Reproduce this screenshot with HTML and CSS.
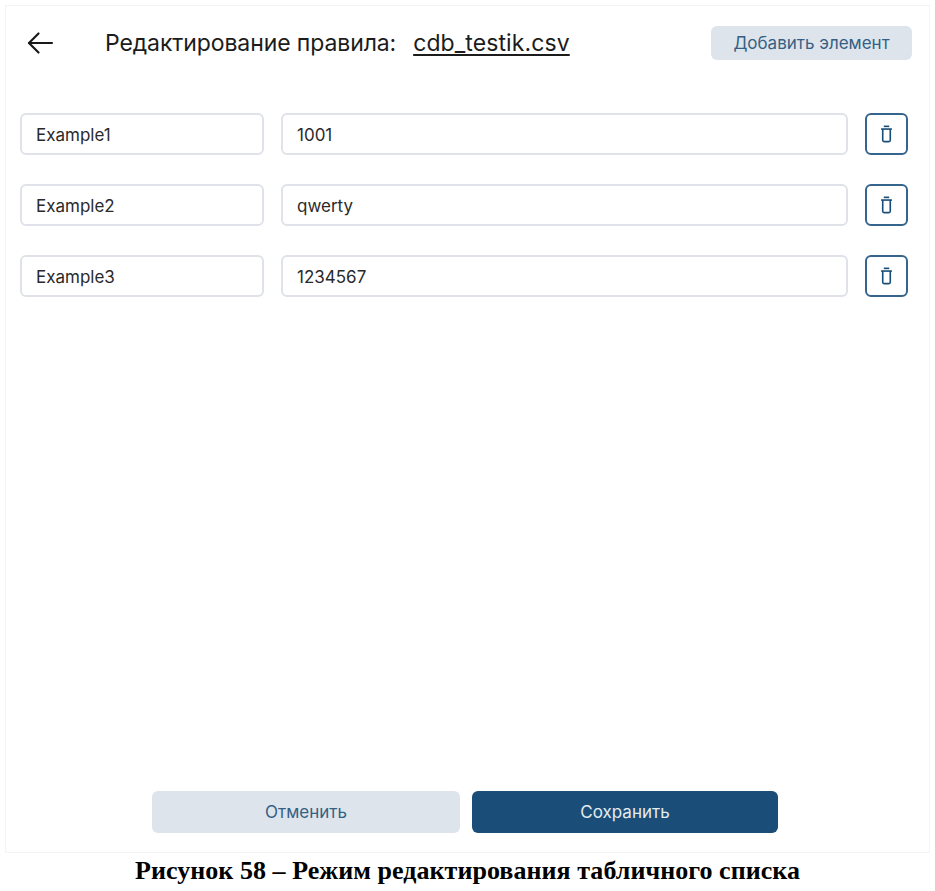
FILE: index.html
```html
<!DOCTYPE html>
<html lang="ru">
<head>
    <meta charset="UTF-8">
    <meta name="viewport" content="width=device-width, initial-scale=1.0">
    <title>Редактирование правила</title>
    <link rel="stylesheet" href="styles.css">
</head>
<body>
    <div class="panel">
        <div class="header">
            <button class="back-btn" aria-label="Назад">
                <svg width="28" height="24" viewBox="0 0 28 24" fill="none" stroke="#1a1a1a" stroke-width="2.2" stroke-linecap="round" stroke-linejoin="round">
                    <path d="M26 12H3"/>
                    <path d="M12.500 2.500L3 12l9.500 9.500"/>
                </svg>
            </button>
            <div class="title">
                <span>Редактирование правила:</span>
                <span class="file-name">cdb_testik.csv</span>
            </div>
            <button class="btn-light btn-add">Добавить элемент</button>
        </div>

        <div class="rows">
            <div class="row">
                <input class="field field-key" value="Example1">
                <input class="field field-value" value="1001">
                <button class="delete-btn" aria-label="Удалить">
                    <svg width="13" height="18" viewBox="0 0 14 20" fill="none" stroke="#1a4e78" stroke-width="1.8" stroke-linejoin="round">
                        <path d="M4 1.500h6"/>
                        <path d="M1 4.500h12"/>
                        <path d="M2.800 4.500V17a1.500 1.500 0 0 0 1.500 1.500h5.400a1.500 1.500 0 0 0 1.500-1.500V4.500"/>
                    </svg>
                </button>
            </div>
            <div class="row">
                <input class="field field-key" value="Example2">
                <input class="field field-value" value="qwerty">
                <button class="delete-btn" aria-label="Удалить">
                    <svg width="13" height="18" viewBox="0 0 14 20" fill="none" stroke="#1a4e78" stroke-width="1.8" stroke-linejoin="round">
                        <path d="M4 1.500h6"/>
                        <path d="M1 4.500h12"/>
                        <path d="M2.800 4.500V17a1.500 1.500 0 0 0 1.500 1.500h5.400a1.500 1.500 0 0 0 1.500-1.500V4.500"/>
                    </svg>
                </button>
            </div>
            <div class="row">
                <input class="field field-key" value="Example3">
                <input class="field field-value" value="1234567">
                <button class="delete-btn" aria-label="Удалить">
                    <svg width="13" height="18" viewBox="0 0 14 20" fill="none" stroke="#1a4e78" stroke-width="1.8" stroke-linejoin="round">
                        <path d="M4 1.500h6"/>
                        <path d="M1 4.500h12"/>
                        <path d="M2.800 4.500V17a1.500 1.500 0 0 0 1.500 1.500h5.400a1.500 1.500 0 0 0 1.500-1.500V4.500"/>
                    </svg>
                </button>
            </div>
        </div>

        <div class="footer">
            <button class="btn-light btn-cancel">Отменить</button>
            <button class="btn-save">Сохранить</button>
        </div>
    </div>
    <p class="caption">Рисунок 58 – Режим редактирования табличного списка</p>
</body>
</html>
```

FILE: styles.css
```css
body {
    margin: 0;
    padding: 5px 5px 0;
    background: white;
    font-family: Inter, Arial, sans-serif;
}

button {
    font-family: inherit;
    cursor: pointer;
}

.panel {
    width: 925px;
    height: 848px;
    box-sizing: border-box;
    border: 1px solid #f4f4f4;
    padding: 20px 17px 19px 14px;
    display: flex;
    flex-direction: column;
}

.header {
    display: flex;
    align-items: center;
    height: 34px;
}

.back-btn {
    width: 28px;
    height: 24px;
    padding: 0;
    margin-left: 6px;
    background: none;
    border: none;
}

.title {
    margin-left: 51px;
    display: flex;
    gap: 17px;
    font-size: 23px;
    color: #1c1c1c;
    letter-spacing: -0.1px;
}

.file-name {
    letter-spacing: 0.1px;
    text-decoration: underline;
    text-underline-offset: 3px;
}

.btn-light {
    background: #dee4ec;
    color: #355f84;
    border: none;
    border-radius: 6px;
}

.btn-add {
    margin-left: auto;
    width: 201px;
    height: 34px;
    font-size: 17px;
}

.rows {
    margin-top: 53px;
    display: flex;
    flex-direction: column;
    gap: 29px;
}

.row {
    display: flex;
    align-items: flex-start;
    gap: 17px;
}

.field {
    height: 42px;
    box-sizing: border-box;
    padding: 2px 14px 0;
    border: 2px solid #dfe2e8;
    border-radius: 6px;
    font-family: inherit;
    font-size: 17px;
    color: #2a2a2a;
    background: white;
}

.field-key {
    width: 244px;
}

.field-value {
    width: 567px;
}

.delete-btn {
    width: 43px;
    height: 42px;
    padding: 0 1px 0 0;
    display: flex;
    align-items: center;
    justify-content: center;
    background: white;
    border: 2px solid #35658d;
    border-radius: 6px;
}

.footer {
    margin-top: auto;
    margin-left: 132px;
    display: flex;
    gap: 12px;
}

.btn-cancel {
    width: 308px;
    height: 42px;
    font-size: 17px;
}

.btn-save {
    width: 306px;
    height: 42px;
    font-size: 17px;
    color: #e6ebf0;
    background: #1a4e78;
    border: none;
    border-radius: 6px;
}

.caption {
    margin: 4px 0 0;
    width: 925px;
    text-align: center;
    font-family: "Liberation Serif", "Times New Roman", serif;
    font-weight: bold;
    font-size: 26px;
    line-height: 28px;
    letter-spacing: 0.05px;
    color: black;
}
```
